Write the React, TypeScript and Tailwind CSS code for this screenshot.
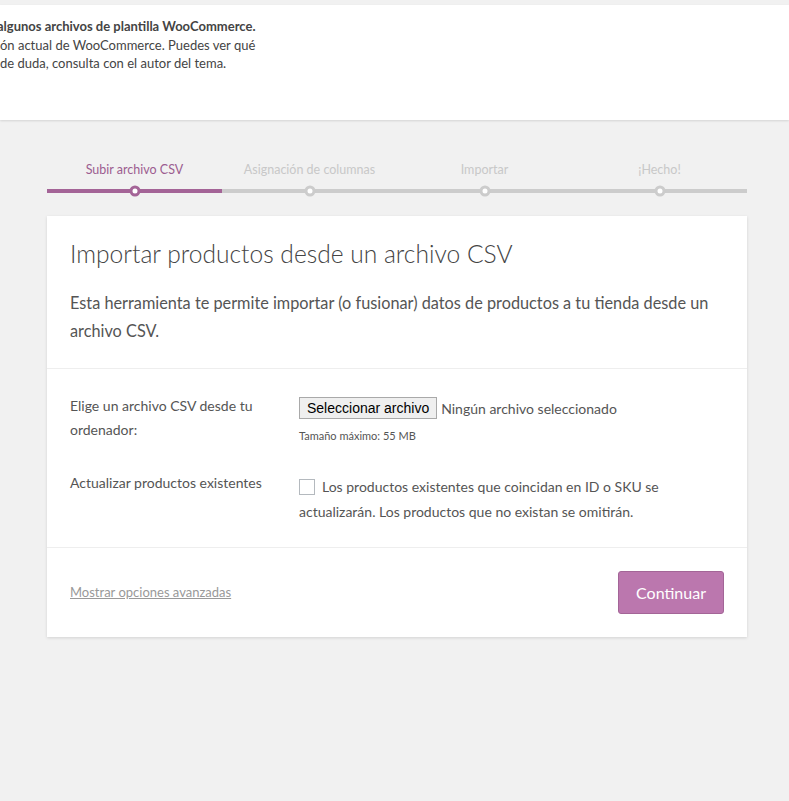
const steps = [
  { label: "Subir archivo CSV", active: true },
  { label: "Asignación de columnas", active: false },
  { label: "Importar", active: false },
  { label: "¡Hecho!", active: false },
];

const Stepper = () => {
  return (
    <div className="ml-[47px] mt-[41px] flex w-[700px]">
      {steps.map((s) => (
        <div key={s.label} className="flex flex-1 flex-col items-center">
          <div
            className={
              s.active
                ? "text-[12.5px] leading-[18px] text-[#9c5d90]"
                : "text-[12.5px] leading-[18px] text-[#c8c8c8]"
            }
          >
            {s.label}
          </div>
          <div
            className={
              s.active
                ? "relative mt-[10px] h-[4px] w-full bg-[#a46497]"
                : "relative mt-[10px] h-[4px] w-full bg-[#cccccc]"
            }
          >
            <span
              className={
                s.active
                  ? "absolute left-1/2 top-1/2 h-[11px] w-[11px] -translate-x-1/2 -translate-y-1/2 rounded-full border-[3px] border-[#a46497] bg-white"
                  : "absolute left-1/2 top-1/2 h-[11px] w-[11px] -translate-x-1/2 -translate-y-1/2 rounded-full border-[3px] border-[#cccccc] bg-white"
              }
            />
          </div>
        </div>
      ))}
    </div>
  );
};

const App = () => {
  return (
    <div className="min-h-[801px] w-[789px] overflow-hidden bg-[#f1f1f1] pt-[5px] font-['Segoe_UI','Lato',sans-serif] text-[#444]">
      <div className="h-[115px] overflow-hidden bg-white pt-[12px] text-[13px] leading-[18.5px] text-[#444] shadow-[0_1px_2px_rgba(0,0,0,0.12)]">
        <div className="-ml-[3px] whitespace-nowrap font-bold">algunos archivos de plantilla WooCommerce.</div>
        <div className="whitespace-nowrap">ón actual de WooCommerce. Puedes ver qué</div>
        <div className="whitespace-nowrap">de duda, consulta con el autor del tema.</div>
      </div>

      <Stepper />

      <div className="ml-[47px] mt-[23px] w-[700px] bg-white shadow-[0_1px_3px_rgba(0,0,0,0.13)]">
        <div className="border-b border-[#eeeeee] px-[23px] pb-[23px] pt-[22px]">
          <h1 className="text-[24.6px] font-light leading-[32px] text-[#444]">
            Importar productos desde un archivo CSV
          </h1>
          <p className="mt-[19px] text-[16.3px] leading-[28px] text-[#555]">
            Esta herramienta te permite importar (o fusionar) datos de productos a tu tienda desde un
            archivo CSV.
          </p>
        </div>

        <div className="border-b border-[#eeeeee] px-[23px] pb-[23px] pt-[25px] text-[14px] text-[#555]">
          <div className="flex">
            <div className="w-[229px] leading-[24px]">Elige un archivo CSV desde tu ordenador:</div>
            <div className="pt-[3px]">
              <div className="flex items-center">
                <button className="h-[22px] border border-[#a9a9a9] bg-[#efefef] px-[7px] font-['Liberation_Sans',sans-serif] text-[14px] leading-[20px] text-black">
                  Seleccionar archivo
                </button>
                <span className="ml-[4px] text-[14px] text-[#555]">Ningún archivo seleccionado</span>
              </div>
              <div className="mt-[10px] text-[11px] leading-[14px] text-[#555]">Tamaño máximo: 55 MB</div>
            </div>
          </div>

          <div className="mt-[28px] flex">
            <div className="w-[229px] leading-[24px]">Actualizar productos existentes</div>
            <div className="mt-[3px] w-[360px] leading-[25px]">
              <span className="mr-[7px] inline-block h-[16px] w-[16px] translate-y-[3px] border border-[#b4b9be] bg-white" />
              Los productos existentes que coincidan en ID o SKU se actualizarán. Los productos que no
              existan se omitirán.
            </div>
          </div>
        </div>

        <div className="flex items-center justify-between px-[23px] pb-[23px] pt-[23px]">
          <a className="text-[13px] text-[#999] underline" href="#">
            Mostrar opciones avanzadas
          </a>
          <button className="h-[43px] rounded-[3px] border border-[#a36597] bg-[#bb77ae] px-[17px] text-[16px] text-white">
            Continuar
          </button>
        </div>
      </div>
    </div>
  );
};

export default App;
